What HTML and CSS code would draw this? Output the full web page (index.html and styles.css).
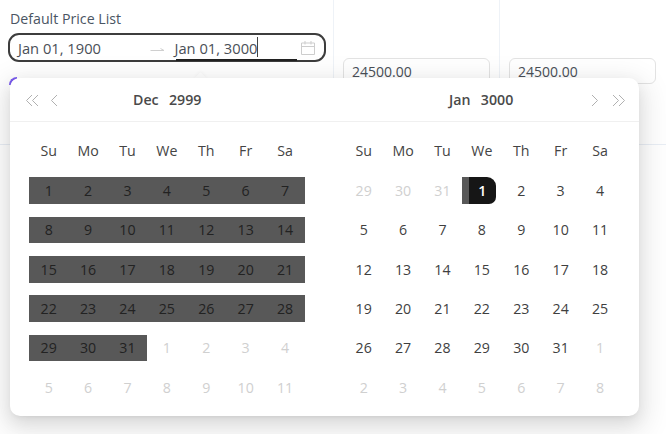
FILE: index.html
```html
<!DOCTYPE html>
<html lang="en">
<head>
<meta charset="utf-8">
<title>Default Price List</title>
<link rel="stylesheet" href="styles.css">
</head>
<body>
<div class="table">
  <div class="col col-a">
    <div class="label">Default Price List</div>
    <div class="range">
      <span class="range-from">Jan 01, 1900</span>
      <svg class="arrow" width="15" height="8" viewBox="0 0 15 8"><path d="M0.5 5.5H14L10.5 3.5" fill="none" stroke="#cfcfcf" stroke-width="1"/></svg>
      <span class="range-to"><span class="range-to-text">Jan 01, 3000</span><i class="caret"></i></span>
      <svg class="cal" width="16" height="16" viewBox="0 0 16 16"><path d="M1.5 3H14.5V14.5H1.5ZM1.5 6.5H14.5M5 1V4.5M11 1V4.5" fill="none" stroke="#cdcdcd" stroke-width="1"/></svg>
    </div>
  </div>
  <div class="col col-b"><div class="amount">24500.00</div></div>
  <div class="col col-c"><div class="amount">24500.00</div></div>
</div>
<span class="accent"></span>
<span class="notch"></span>
<div class="popup">
  <div class="panel">
    <div class="head">
      <span class="nav-l">
        <svg width="14" height="13" viewBox="0 0 14 13"><path d="M7 1L1.5 6.5L7 12M13 1L7.5 6.5L13 12" fill="none" stroke="#b0b0b0" stroke-width="1"/></svg>
        <svg width="8" height="13" viewBox="0 0 8 13"><path d="M7 1L1.5 6.5L7 12" fill="none" stroke="#b0b0b0" stroke-width="1"/></svg>
      </span>
      <span class="title">Dec&nbsp; 2999</span>
    </div>
    <div class="grid">
      <span class="dow">Su</span><span class="dow">Mo</span><span class="dow">Tu</span><span class="dow">We</span><span class="dow">Th</span><span class="dow">Fr</span><span class="dow">Sa</span>
      <span class="d r">1</span><span class="d r">2</span><span class="d r">3</span><span class="d r">4</span><span class="d r">5</span><span class="d r">6</span><span class="d r">7</span>
      <span class="d r">8</span><span class="d r">9</span><span class="d r">10</span><span class="d r">11</span><span class="d r">12</span><span class="d r">13</span><span class="d r">14</span>
      <span class="d r">15</span><span class="d r">16</span><span class="d r">17</span><span class="d r">18</span><span class="d r">19</span><span class="d r">20</span><span class="d r">21</span>
      <span class="d r">22</span><span class="d r">23</span><span class="d r">24</span><span class="d r">25</span><span class="d r">26</span><span class="d r">27</span><span class="d r">28</span>
      <span class="d r">29</span><span class="d r">30</span><span class="d r">31</span><span class="d o">1</span><span class="d o">2</span><span class="d o">3</span><span class="d o">4</span>
      <span class="d o">5</span><span class="d o">6</span><span class="d o">7</span><span class="d o">8</span><span class="d o">9</span><span class="d o">10</span><span class="d o">11</span>
    </div>
  </div>
  <div class="panel panel-right">
    <div class="head">
      <span class="title">Jan&nbsp; 3000</span>
      <span class="nav-r">
        <svg width="8" height="13" viewBox="0 0 8 13"><path d="M1 1L6.5 6.5L1 12" fill="none" stroke="#b0b0b0" stroke-width="1"/></svg>
        <svg width="14" height="13" viewBox="0 0 14 13"><path d="M1 1L6.5 6.5L1 12M7 1L12.5 6.5L7 12" fill="none" stroke="#b0b0b0" stroke-width="1"/></svg>
      </span>
    </div>
    <div class="grid">
      <span class="dow">Su</span><span class="dow">Mo</span><span class="dow">Tu</span><span class="dow">We</span><span class="dow">Th</span><span class="dow">Fr</span><span class="dow">Sa</span>
      <span class="d o">29</span><span class="d o">30</span><span class="d o">31</span><span class="d end"><b>1</b></span><span class="d">2</span><span class="d">3</span><span class="d">4</span>
      <span class="d">5</span><span class="d">6</span><span class="d">7</span><span class="d">8</span><span class="d">9</span><span class="d">10</span><span class="d">11</span>
      <span class="d">12</span><span class="d">13</span><span class="d">14</span><span class="d">15</span><span class="d">16</span><span class="d">17</span><span class="d">18</span>
      <span class="d">19</span><span class="d">20</span><span class="d">21</span><span class="d">22</span><span class="d">23</span><span class="d">24</span><span class="d">25</span>
      <span class="d">26</span><span class="d">27</span><span class="d">28</span><span class="d">29</span><span class="d">30</span><span class="d">31</span><span class="d o">1</span>
      <span class="d o">2</span><span class="d o">3</span><span class="d o">4</span><span class="d o">5</span><span class="d o">6</span><span class="d o">7</span><span class="d o">8</span>
    </div>
  </div>
</div>
</body>
</html>
```
FILE: styles.css
```css
* { box-sizing: border-box; }
html, body { margin: 0; height: 100%; }
body {
  width: 666px; height: 434px; overflow: hidden; position: relative;
  background: #fff;
  font-family: "Open Sans", "Noto Sans", sans-serif;
  font-size: 14px; color: #3a3a3a;
}
.table { display: flex; height: 145px; border-bottom: 1px solid #e9eef5; }
.col { padding-left: 9px; }
.col-a { width: 334px; border-right: 1px solid #eef2f7; padding-top: 8px; padding-left: 8px; }
.col-b { width: 166px; border-right: 1px solid #eef2f7; padding-top: 58px; }
.col-c { flex: 1; padding-top: 58px; }
.label { font-size: 14.2px; line-height: 22px; color: #4a5563; padding-left: 2px; }
.range {
  margin-top: 3px; width: 318px; height: 29px; display: flex; align-items: center;
  border: 2.5px solid #3d3d3d; border-radius: 11px; padding: 0 7.5px 0 8px;
  font-size: 14.7px; color: #4a4f57;
}
.range-from { width: 132px; }
.arrow { margin-right: 9.5px; margin-top: 2px; }
.range-to { position: relative; width: 122px; height: 24px; line-height: 22px; margin-top: 2px; }
.range-to::after { content: ""; position: absolute; left: 1px; right: 0; bottom: 0; height: 1.5px; background: #222; }
.caret { position: absolute; left: 82.5px; top: 0; width: 1px; height: 20px; background: #444; }
.cal { margin-left: 3px; }
.amount {
  width: 147px; height: 26px; border: 1px solid #e3e3e3; border-radius: 6px;
  padding: 2px 8px; line-height: 22px; font-size: 14px; color: #4a4f57;
}
.accent {
  position: absolute; left: 9px; top: 76.5px; width: 8px; height: 8px;
  border-left: 2px solid #7b5cf0; border-top: 2px solid #7b5cf0; border-top-left-radius: 8px;
}
.notch {
  position: absolute; left: 196px; top: 74px; width: 9px; height: 9px; background: #fff;
  transform: rotate(45deg); box-shadow: -1px -1px 3px rgba(0,0,0,.03);
}
.popup {
  position: absolute; left: 10px; top: 78px; width: 629px; height: 338px;
  background: #fff; border-radius: 10px; display: flex;
  box-shadow: 0 6px 16px rgba(0,0,0,.08), 0 3px 6px -4px rgba(0,0,0,.12), 0 9px 28px 8px rgba(0,0,0,.09);
}
.panel { width: 314px; }
.panel-right { width: 315px; }
.head {
  height: 44px; display: flex; align-items: center; position: relative; border-bottom: 1px solid #f0f0f0;
}
.title { position: absolute; top: 0; line-height: 44px; font-size: 14.2px; font-weight: 600; color: #4a4a4a; word-spacing: 1.5px; }
.panel .title { left: 123px; }
.panel-right .title { left: 125px; }
.nav-l { position: absolute; left: 15px; top: 15.5px; display: flex; gap: 11px; }
.nav-r { position: absolute; left: 267px; top: 15.5px; display: flex; gap: 13px; }
.grid {
  display: grid; grid-template-columns: repeat(7, 39.4px); grid-template-rows: 40px; grid-auto-rows: 39.3px;
  padding: 9px 0 0 19px;
}
.panel-right .grid { padding-left: 20px; }
.dow { display: flex; align-items: center; justify-content: center; font-size: 14.2px; color: #444; padding-bottom: 1.5px; }
.d { display: flex; align-items: center; justify-content: center; color: #3f3f3f; font-size: 14.2px; position: relative; }
.r { background: #585858; color: #222; background-clip: content-box; padding: 6.4px 0; }
.o { color: #d0d0d0; }
.end b {
  position: relative; width: 27px; height: 26.5px; background: #161616; color: #fff; font-weight: 600;
  display: flex; align-items: center; justify-content: center; margin-left: 1px;
  border-radius: 0 9px 7px 0;
}
.end::before { content: ""; position: absolute; left: 0; top: 6.4px; width: 8px; height: 26.5px; background: #585858; }
```
